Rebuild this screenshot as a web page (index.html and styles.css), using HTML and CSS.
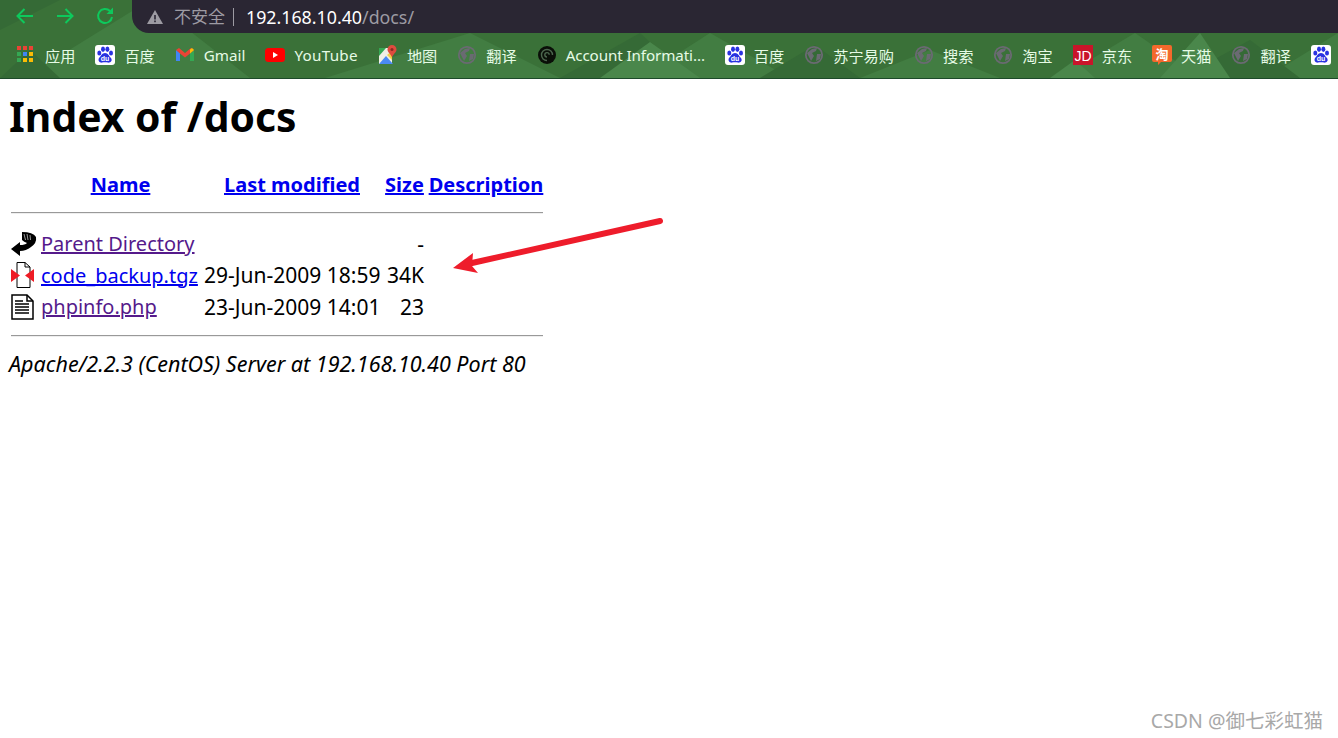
FILE: index.html
```html
<!DOCTYPE html>
<html lang="en">
<head>
  <meta charset="UTF-8" />
  <title>Index of /docs</title>
  <link rel="stylesheet" href="styles.css">
</head>
<body>
  <svg class="defs" width="0" height="0">
    <symbol id="globe" viewBox="0 0 20 20">
      <circle cx="10" cy="10" r="8.2" fill="none" stroke="#6a6a72" stroke-width="1.8"/>
      <path d="M3 8 L8 4 L13 3 L12 6 L8 8 L10 11 L7 16 L5 12 Z M13 9 L17 9 L16 14 L12 16 Z" fill="#6a6a72"/>
    </symbol>
    <symbol id="baidu" viewBox="0 0 20 20">
      <rect width="20" height="20" rx="3" fill="#fff"/>
      <ellipse cx="4.3" cy="8" rx="2" ry="2.6" fill="#2932e1"/>
      <ellipse cx="8" cy="4.2" rx="2" ry="2.7" fill="#2932e1"/>
      <ellipse cx="12.4" cy="4.2" rx="2" ry="2.7" fill="#2932e1"/>
      <ellipse cx="16" cy="8" rx="2" ry="2.6" fill="#2932e1"/>
      <path d="M10 8 C13 8 14 11 16 13 C18 16 15 18 13 17.6 C11 17.2 9 17.2 7 17.6 C5 18 2.500 16 4 13 C6 11 7 8 10 8 Z" fill="#2932e1"/>
    </symbol>
  </svg>

  <header class="chrome">
    <svg class="theme" width="1338" height="78" viewBox="0 0 1338 78">
      <g fill="#427d42">
        <polygon points="24,78 150,0 250,78"/>
        <polygon points="325,78 470,33 560,78"/>
        <polygon points="640,78 710,33 790,78"/>
        <polygon points="1060,78 1135,33 1200,78"/>
        <polygon points="860,78 930,50 1000,78"/>
        <polygon points="1265,78 1338,33 1338,78"/>
      </g>
      <g fill="#356a36">
        <polygon points="0,0 60,0 0,30"/>
        <polygon points="320,0 400,0 360,33"/>
        <polygon points="560,78 640,33 690,78"/>
        <polygon points="1180,78 1250,40 1300,78"/>
        <polygon points="0,78 30,50 60,78"/>
        <polygon points="760,78 815,45 860,78"/>
      </g>
      <g fill="#4a874b">
        <polygon points="600,78 650,42 700,78"/>
        <polygon points="1050,78 1075,60 1095,78"/>
        <polygon points="1160,78 1200,33 1230,78"/>
      </g>
    </svg>

    <div class="toolbar">
      <div class="nav">
        <svg width="20" height="20" viewBox="0 0 20 20"><path d="M18 9 H3 M9.500 2 L2.500 9 L9.500 16" class="nav-stroke"/></svg>
        <svg width="20" height="20" viewBox="0 0 20 20"><path d="M2 9 H17 M10.500 2 L17.500 9 L10.500 16" class="nav-stroke"/></svg>
        <svg width="20" height="20" viewBox="0 0 20 20"><path d="M15 4 A7 7 0 1 0 17 10" class="nav-stroke"/><path d="M11.500 7 H18 V0.500 Z" fill="#0dc95c"/></svg>
      </div>
      <div class="address">
        <svg class="warn" width="16" height="14" viewBox="0 0 16 14"><path d="M8 0 L16 14 H0 Z" fill="#9d9ba3"/><rect x="7.200" y="5" width="1.600" height="4.500" fill="#2a2633"/><rect x="7.200" y="10.500" width="1.600" height="1.700" fill="#2a2633"/></svg>
        <span class="insecure">不安全</span>
        <span class="url"><span class="host">192.168.10.40</span>/docs/</span>
      </div>
    </div>

    <nav class="bookmarks">
      <a class="bm">
        <svg width="20" height="20" viewBox="0 0 20 20">
          <rect x="1" y="1" width="4" height="4" fill="#ea4335"/><rect x="7" y="1" width="4" height="4" fill="#ea4335"/><rect x="13" y="1" width="4" height="4" fill="#ea4335"/>
          <rect x="1" y="7" width="4" height="4" fill="#34a853"/><rect x="7" y="7" width="4" height="4" fill="#4285f4"/><rect x="13" y="7" width="4" height="4" fill="#fbbc05"/>
          <rect x="1" y="13" width="4" height="4" fill="#34a853"/><rect x="7" y="13" width="4" height="4" fill="#fbbc05"/><rect x="13" y="13" width="4" height="4" fill="#fbbc05"/>
        </svg>
        应用</a>
      <a class="bm"><svg width="20" height="20"><use href="#baidu"/><text x="10" y="16" class="du">du</text></svg>百度</a>
      <a class="bm">
        <svg width="20" height="20" viewBox="0 0 20 20">
          <path d="M1 5 V16 H5 V8 Z" fill="#4285f4"/><path d="M15 8 V16 H19 V5 Z" fill="#34a853"/>
          <path d="M1 5 L4 3 L10 8 L16 3 L19 5 L15 8.500 L10 12.500 L5 8.500 Z" fill="#ea4335"/><path d="M15 4.500 L17 3 L19 5 L15 8.500 Z" fill="#fbbc05"/>
        </svg>
        Gmail</a>
      <a class="bm bm-wide">
        <svg width="20" height="20" viewBox="0 0 20 20"><rect y="3" width="20" height="14" rx="3.500" fill="#f00"/><path d="M8 7 L13 10 L8 13 Z" fill="#fff"/></svg>
        YouTube</a>
      <a class="bm">
        <svg width="20" height="20" viewBox="0 0 20 20">
          <path d="M1 3 H14 V19 H1 Z" fill="#f1efe6"/><path d="M1 3 H8 L1 11 Z" fill="#35a853"/><path d="M1 19 L8 11 L15 19 Z" fill="#4a8af4"/><path d="M9 10 L14 6 V15 Z" fill="#f7d046"/>
          <path d="M14 0 A4.500 4.500 0 0 1 18.500 4.500 C18.500 7.500 15 9 14 12.500 C13 9 9.500 7.500 9.500 4.500 A4.500 4.500 0 0 1 14 0 Z" fill="#dd4b3e"/>
          <circle cx="14" cy="4.500" r="1.500" fill="#8c2a22"/>
        </svg>
        地图</a>
      <a class="bm"><svg width="20" height="20"><use href="#globe"/></svg>翻译</a>
      <a class="bm bm-long">
        <svg width="20" height="20" viewBox="0 0 20 20"><circle cx="10" cy="10" r="9" fill="#0a0f08"/><path d="M10 15.500 A5.500 5.500 0 1 1 15.500 10 M10 12 A2.200 2.200 0 1 1 12.200 9.700" fill="none" stroke="#4c664e" stroke-width="1.400"/></svg>
        Account Informati...</a>
      <a class="bm"><svg width="20" height="20"><use href="#baidu"/><text x="10" y="16" class="du">du</text></svg>百度</a>
      <a class="bm"><svg width="20" height="20"><use href="#globe"/></svg>苏宁易购</a>
      <a class="bm"><svg width="20" height="20"><use href="#globe"/></svg>搜索</a>
      <a class="bm"><svg width="20" height="20"><use href="#globe"/></svg>淘宝</a>
      <a class="bm">
        <svg width="20" height="20" viewBox="0 0 20 20"><rect width="20" height="20" fill="#c9152a"/><text x="10" y="15.500" class="jd">JD</text></svg>
        京东</a>
      <a class="bm">
        <svg width="20" height="20" viewBox="0 0 20 20"><path d="M2 0 H18 Q20 0 20 2 V15 Q20 17 18 17 H9 L6 20 V17 H2 Q0 17 0 15 V2 Q0 0 2 0 Z" fill="#f4692c"/><text x="10" y="13.500" class="tao">淘</text></svg>
        天猫</a>
      <a class="bm"><svg width="20" height="20"><use href="#globe"/></svg>翻译</a>
      <a class="bm"><svg width="20" height="20"><use href="#baidu"/><text x="10" y="16" class="du">du</text></svg></a>
    </nav>
  </header>

  <main class="page">
    <h1>Index of /docs</h1>
    <table class="listing">
      <colgroup>
        <col class="c-icon"><col class="c-name"><col class="c-date"><col class="c-size"><col class="c-desc">
      </colgroup>
      <tr class="head">
        <th></th>
        <th><a href="#">Name</a></th>
        <th><a href="#">Last modified</a></th>
        <th><a href="#">Size</a></th>
        <th><a href="#">Description</a></th>
      </tr>
      <tr class="rule rule-top"><td colspan="5"><hr></td></tr>
      <tr class="row">
        <td class="icon">
          <svg width="26" height="26" viewBox="0 0 26 26">
            <path d="M11 1 Q22 1 25 6 Q26 12 20 16 Q15 20 9 20 L9 25 L0 18 L9 11 L9 14 Q14 14 16 12 Q13 11 11 9 Z" fill="#000"/>
            <path d="M13 3 L14.500 9 M16 3 L17 9 M19 4 L19.500 9" stroke="#999" stroke-width="1"/>
          </svg>
        </td>
        <td><a class="seen" href="#">Parent Directory</a></td>
        <td></td>
        <td class="size">-</td>
        <td></td>
      </tr>
      <tr class="row">
        <td class="icon">
          <svg width="26" height="26" viewBox="0 0 26 26">
            <path d="M6 0.500 H14 L19 5 V25.500 H6 Z" fill="#fff" stroke="#000"/>
            <path d="M14 0.500 V5 H19" fill="none" stroke="#000"/>
            <path d="M0 7 L9 13.500 L0 20 Z M23 7 L14 13.500 L23 20 Z" fill="#ee1c25"/>
          </svg>
        </td>
        <td><a href="#">code_backup.tgz</a></td>
        <td class="date">29-Jun-2009 18:59</td>
        <td class="size">34K</td>
        <td></td>
      </tr>
      <tr class="row">
        <td class="icon">
          <svg width="26" height="26" viewBox="0 0 26 26">
            <path d="M1 1 H16 L22 7 V25 H1 Z" fill="#fff" stroke="#000" stroke-width="1.500"/>
            <path d="M16 1 V7 H22" fill="none" stroke="#000" stroke-width="1.500"/>
            <path d="M4 7 H12 M4 10 H18 M4 13 H18 M4 16 H18 M4 19 H18" stroke="#000" stroke-width="1.500"/>
          </svg>
        </td>
        <td><a class="seen" href="#">phpinfo.php</a></td>
        <td class="date">23-Jun-2009 14:01</td>
        <td class="size">23</td>
        <td></td>
      </tr>
      <tr class="rule rule-bottom"><td colspan="5"><hr></td></tr>
    </table>
    <address>Apache/2.2.3 (CentOS) Server at 192.168.10.40 Port 80</address>
  </main>

  <svg class="arrow" width="240" height="80" viewBox="0 0 240 80">
    <path d="M220 16 L32 58" fill="none" stroke="#ee1c2b" stroke-width="6" stroke-linecap="round"/>
    <path d="M13 63 L33 48 L32 61 L38 68 Z" fill="#ee1c2b"/>
  </svg>

  <div class="watermark">CSDN @御七彩虹猫</div>
</body>
</html>
```

FILE: styles.css
```css
html, body {
  margin: 0;
  height: 100%;
  background: #fff;
  overflow: hidden;
}
body {
  font-family: "Noto Sans", "Noto Sans CJK SC", sans-serif;
  color: #000;
  font-size: 20px;
}
.defs {
  display: block;
  height: 0;
}
.du {
  font-family: "Liberation Sans", sans-serif;
  font-size: 7px;
  font-weight: bold;
  fill: #fff;
  text-anchor: middle;
}
.jd {
  font-family: "Liberation Sans", sans-serif;
  font-size: 14px;
  fill: #fff;
  text-anchor: middle;
}
.tao {
  font-family: "Noto Sans CJK SC", sans-serif;
  font-size: 13px;
  font-weight: bold;
  fill: #fff;
  text-anchor: middle;
}

/* browser chrome */
.chrome {
  position: relative;
  height: 78px;
  background: #3a7138;
  border-bottom: 1px solid #1d4a2a;
  overflow: hidden;
}
.theme {
  position: absolute;
  left: 0;
  top: 0;
}
.toolbar {
  position: relative;
  display: flex;
  height: 33px;
}
.nav {
  display: flex;
  align-items: center;
  gap: 20px;
  width: 132px;
  padding-left: 15px;
  box-sizing: border-box;
}
.nav-stroke {
  fill: none;
  stroke: #0dc95c;
  stroke-width: 2;
}
.address {
  flex: 1;
  display: flex;
  align-items: center;
  background: #2a2633;
  border-bottom-left-radius: 17px;
  padding-left: 15px;
  font-size: 17px;
  color: #9d9ba3;
}
.insecure {
  margin-left: 11px;
  padding-right: 8px;
  border-right: 1px solid #9d9ba3;
  line-height: 18px;
}
.url {
  margin-left: 12px;
  font-size: 17.8px;
}
.host {
  color: #fff;
}
.bookmarks {
  position: relative;
  display: flex;
  align-items: center;
  gap: 20px;
  height: 43px;
  padding-left: 16px;
  font-size: 15.2px;
  color: #e6fbe6;
  white-space: nowrap;
}
.bm {
  display: flex;
  align-items: center;
  gap: 9px;
  color: inherit;
  text-decoration: none;
}
.bm svg {
  flex: none;
}
.bm-wide {
  letter-spacing: 0.3px;
}
.bm-long {
  letter-spacing: -0.1px;
}

/* apache listing */
.page {
  padding: 0 9px;
}
h1 {
  margin: 0;
  padding-top: 15px;
  height: 76px;
  font-size: 40.8px;
  line-height: 44px;
  font-weight: bold;
}
.listing {
  border-collapse: collapse;
  table-layout: fixed;
  width: 536px;
}
.c-icon { width: 30px; }
.c-name { width: 163px; }
.c-date { width: 180px; }
.c-size { width: 45px; }
.c-desc { width: 118px; }
.listing th, .listing td {
  padding: 0;
  white-space: nowrap;
  text-align: left;
}
.listing td {
  padding-left: 2px;
}
.head {
  height: 28px;
}
.head th {
  text-align: center;
}
.rule-top {
  height: 30px;
}
.rule-bottom {
  height: 26px;
}
.listing td[colspan] {
  padding: 0 2px;
}
hr {
  margin: 0;
  height: 0;
  border: 0;
  border-top: 1px solid #999;
  border-bottom: 1px solid #eee;
}
.row {
  height: 31.5px;
}
.listing .icon {
  padding: 0 0 0 2px;
  line-height: 0;
}
.listing .date {
  font-size: 21px;
}
.listing .size {
  text-align: right;
  padding-right: 3px;
  font-size: 21px;
}
a {
  color: #00e;
  text-decoration: underline;
}
a.seen {
  color: #551a8b;
}
address {
  font-size: 21.5px;
  font-style: italic;
}

/* overlays */
.arrow {
  position: absolute;
  left: 440px;
  top: 205px;
}
.watermark {
  position: absolute;
  right: 15px;
  top: 705px;
  font-size: 19.5px;
  color: #a8a8a8;
}
```
